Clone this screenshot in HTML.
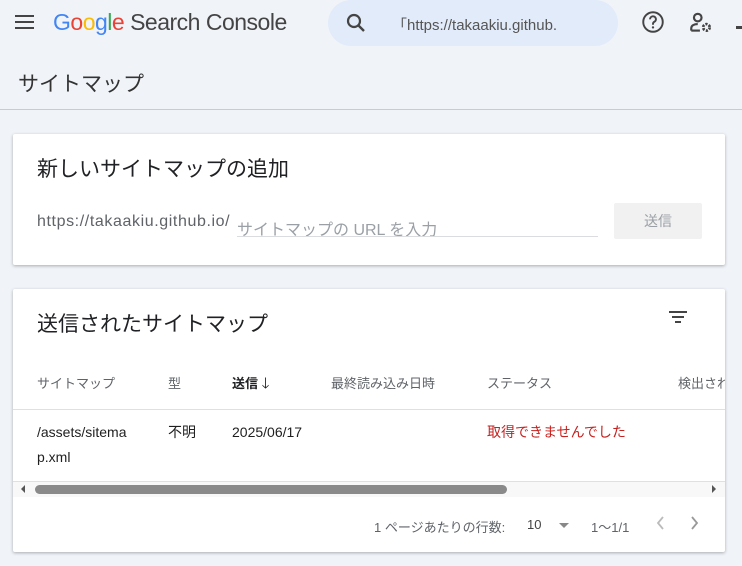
<!DOCTYPE html>
<html><head><meta charset="utf-8"><style>
body{margin:0;width:742px;height:566px;overflow:hidden;background:#f0f4f9;font-family:"Liberation Sans","Noto Sans CJK JP",sans-serif;color:#1f1f1f;position:relative}
.a{position:absolute;white-space:nowrap}
.card{position:absolute;left:13px;width:712px;background:#fff;border-radius:2px;box-shadow:0 1px 3px rgba(0,0,0,.3);overflow:hidden}
.th{position:absolute;top:84px;font-size:13px;color:#5f6368;white-space:nowrap}
</style></head><body>
<div class="a" style="left:15px;top:15px;width:19px;">
<div style="height:2px;background:#444;margin-bottom:4px"></div><div style="height:2px;background:#444;margin-bottom:4px"></div><div style="height:2px;background:#444"></div></div>
<div class="a" style="left:53px;top:9px;font-size:23px;letter-spacing:-0.5px"><span style="color:#4285f4">G</span><span style="color:#ea4335">o</span><span style="color:#fbbc05">o</span><span style="color:#4285f4">g</span><span style="color:#34a853">l</span><span style="color:#ea4335">e</span> <span style="color:#444">Search Console</span></div>
<div class="a" style="left:328px;top:0;width:290px;height:46px;border-radius:23px;background:#e2ebf9"></div>
<svg class="a" style="left:344px;top:11px" width="24" height="24" viewBox="0 0 24 24"><circle cx="10" cy="10" r="6" fill="none" stroke="#444" stroke-width="2.2"/><path d="M14.5 14.5L20 20" stroke="#444" stroke-width="2.4"/></svg>
<div class="a" style="left:392px;top:14px;font-size:15px;color:#555">「https://takaakiu.github.</div>
<svg class="a" style="left:640px;top:9px" width="26" height="26" viewBox="0 0 24 24"><circle cx="12" cy="12" r="9" fill="none" stroke="#444" stroke-width="1.8"/><path d="M9.3 9.5a2.7 2.7 0 1 1 3.8 2.4c-.8.4-1.1 1-1.1 2v.6" fill="none" stroke="#444" stroke-width="1.8"/><circle cx="12" cy="17" r="1.1" fill="#444"/></svg>
<svg class="a" style="left:688px;top:10px" width="26" height="26" viewBox="0 0 24 24"><circle cx="9" cy="7" r="3.5" fill="none" stroke="#444" stroke-width="2"/><path d="M3 19v-2c0-3 3-4 6-4" fill="none" stroke="#444" stroke-width="2"/><path d="M3 19h8" stroke="#444" stroke-width="2"/><circle cx="17" cy="16" r="3" fill="none" stroke="#444" stroke-width="2.5" stroke-dasharray="2 1.2"/></svg>
<div class="a" style="left:736px;top:26px;width:8px;height:3px;background:#444"></div>
<div class="a" style="left:18px;top:68px;font-size:21px;color:#333">サイトマップ</div>
<div class="a" style="left:0;top:109px;width:742px;height:1px;background:#c8ccd2"></div>

<div class="card" style="top:134px;height:131px">
<div class="a" style="left:24px;top:19px;font-size:21px;color:#202124">新しいサイトマップの追加</div>
<div class="a" style="left:24px;top:79px;font-size:16px;color:#5f6368;letter-spacing:0.6px">https://takaakiu.github.io/</div>
<div class="a" style="left:224px;top:82px;font-size:16px;color:#9aa0a6">サイトマップの URL を入力</div>
<div class="a" style="left:224px;top:102px;width:361px;height:1px;background:#dadce0"></div>
<div class="a" style="left:601px;top:69px;width:88px;height:36px;background:#f1f1f1;border-radius:2px;color:#9aa0a6;font-size:14px;text-align:center;line-height:36px">送信</div>
</div>

<div class="card" style="top:289px;height:263px">
<div class="a" style="left:24px;top:19px;font-size:21px;color:#202124">送信されたサイトマップ</div>
<div class="a" style="left:656px;top:22px;width:18px;height:2px;background:#444"></div>
<div class="a" style="left:659px;top:27px;width:12px;height:2px;background:#444"></div>
<div class="a" style="left:662px;top:32px;width:6px;height:2px;background:#444"></div>
<div class="th" style="left:24px">サイトマップ</div>
<div class="th" style="left:155px">型</div>
<div class="th" style="left:219px;color:#202124;font-weight:bold">送信 <span style="font-weight:normal;font-size:15px">🡓</span></div>
<div class="th" style="left:318px">最終読み込み日時</div>
<div class="th" style="left:474px">ステータス</div>
<div class="th" style="left:665px">検出された</div>
<div class="a" style="left:0;top:120px;width:712px;height:1px;background:#e0e0e0"></div>
<div class="a" style="left:24px;top:131px;font-size:14px;line-height:25px">/assets/sitema<br>p.xml</div>
<div class="a" style="left:155px;top:131px;font-size:14px;line-height:25px">不明</div>
<div class="a" style="left:219px;top:131px;font-size:14px;line-height:25px">2025/06/17</div>
<div class="a" style="left:474px;top:131px;font-size:14px;line-height:25px;color:#c5221f">取得できませんでした</div>
<div class="a" style="left:0;top:192px;width:712px;height:1px;background:#e0e0e0"></div>
<div class="a" style="left:0;top:193px;width:712px;height:15px;background:#f8f8f8"></div>
<div class="a" style="left:22px;top:196px;width:472px;height:9px;border-radius:5px;background:#8a8a8a"></div>
<div class="a" style="left:8px;top:196px;width:0;height:0;border:4px solid transparent;border-right-color:#555;border-left:0"></div>
<div class="a" style="left:699px;top:196px;width:0;height:0;border:4px solid transparent;border-left-color:#555;border-right:0"></div>
<div class="a" style="left:361px;top:228px;font-size:13px;color:#5f6368">1 ページあたりの行数:</div>
<div class="a" style="left:514px;top:228px;font-size:13px;color:#444">10</div>
<div class="a" style="left:546px;top:234px;width:0;height:0;border:5px solid transparent;border-top-color:#888;border-bottom:0"></div>
<div class="a" style="left:578px;top:228px;font-size:13px;color:#5f6368">1〜1/1</div>
<svg class="a" style="left:641px;top:225px" width="14" height="18" viewBox="0 0 14 18"><path d="M9 3L4 9l5 6" fill="none" stroke="#bbb" stroke-width="1.8"/></svg>
<svg class="a" style="left:674px;top:225px" width="14" height="18" viewBox="0 0 14 18"><path d="M5 3l5 6-5 6" fill="none" stroke="#999" stroke-width="1.8"/></svg>
</div>
</body></html>
